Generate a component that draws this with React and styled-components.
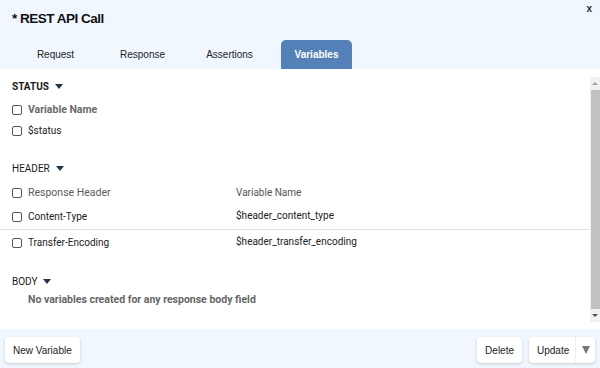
import React from "react";
import styled, { createGlobalStyle } from "styled-components";

const Global = createGlobalStyle`
  html, body { margin: 0; padding: 0; background: #fff; }
  body { font-family: "Liberation Sans", Arial, sans-serif; }
  * { box-sizing: border-box; }
`;

const Dialog = styled.div`
  width: 600px;
  height: 368px;
  display: flex;
  flex-direction: column;
  background: #f1f7fe;
  overflow: hidden;
`;

const Header = styled.div`
  position: relative;
  height: 69px;
  display: flex;
  flex-direction: column;
`;

const Title = styled.div`
  height: 40px;
  padding: 11px 0 0 12px;
  font-size: 13.5px;
  font-weight: bold;
  color: #111;
  letter-spacing: -0.5px;
`;

const Close = styled.div`
  position: absolute;
  top: 3px;
  right: 8px;
  font-size: 10px;
  font-weight: bold;
  color: #1d2b4a;
`;

const Tabs = styled.div`
  display: flex;
  gap: 16px;
  padding-left: 20px;
  height: 29px;
`;

const Tab = styled.div`
  width: 71px;
  height: 29px;
  display: flex;
  align-items: center;
  justify-content: center;
  font-size: 10px;
  border-radius: 5px 5px 0 0;
  color: ${(p) => (p.$active ? "#fff" : "#222")};
  background: ${(p) => (p.$active ? "#5381b8" : "transparent")};
  font-weight: ${(p) => (p.$active ? "bold" : "normal")};
  padding-bottom: 1px;
`;

const Body = styled.div`
  height: 260px;
  background: #fff;
  display: flex;
`;

const Scroll = styled.div`
  flex: 1;
  display: flex;
  flex-direction: column;
  font-family: Roboto, "Liberation Sans", sans-serif;
  font-size: 10px;
  color: #222;
`;

const SectionHead = styled.div`
  height: 20px;
  margin-top: ${(p) => p.$mt}px;
  padding-left: 12px;
  display: flex;
  align-items: center;
  gap: 6px;
  font-size: 10px;
  font-weight: ${(p) => (p.$bold ? "bold" : "normal")};
  color: #1a1a1a;
`;

const Caret = styled.span`
  width: 0;
  height: 0;
  border-left: 4.5px solid transparent;
  border-right: 4.5px solid transparent;
  border-top: 5px solid #24344a;
`;

const Row = styled.div`
  height: ${(p) => p.$h}px;
  margin-top: ${(p) => p.$mt || 0}px;
  display: flex;
  align-items: center;
  padding-left: 12px;
  border-bottom: ${(p) => (p.$line ? "1px solid #e2e2e2" : "none")};
  color: ${(p) => (p.$strong ? "#6a6a6a" : p.$head ? "#5a5a5a" : "#222")};
  font-weight: ${(p) => (p.$strong ? "bold" : "normal")};
  font-size: ${(p) => (p.$head ? "10.5px" : "10px")};
`;

const Check = styled.span`
  width: 10px;
  height: 10px;
  border: 1px solid #555;
  border-radius: 2px;
  margin-right: 6px;
  flex-shrink: 0;
`;

const Cell = styled.span`
  width: 208px;
`;

const VarCell = styled.span`
  font-size: 10px;
  color: ${(p) => (p.$head ? "#555" : "#222")};
  margin-top: ${(p) => p.$mt || 0}px;
`;

const Empty = styled.div`
  height: 16px;
  padding-left: 28px;
  display: flex;
  align-items: center;
  font-size: 10.5px;
  font-weight: bold;
  color: #666;
`;

const ScrollBar = styled.div`
  width: 10px;
  margin: 8px 0 7px;
  background: #f1f1f1;
  display: flex;
  flex-direction: column;
  align-items: center;
`;

const Arrow = styled.div`
  height: 13px;
  display: flex;
  align-items: center;
  justify-content: center;
  &::after {
    content: "";
    border-left: 3px solid transparent;
    border-right: 3px solid transparent;
    ${(p) => (p.$up ? "border-bottom: 3px solid #a3a3a3;" : "border-top: 3px solid #505050;")}
  }
`;

const Thumb = styled.div`
  flex: 1;
  width: 9px;
  background: #c1c1c1;
`;

const Footer = styled.div`
  flex: 1;
  display: flex;
  align-items: flex-start;
  padding: 8px 5px 0;
  gap: 7px;
`;

const Button = styled.div`
  height: 26px;
  padding: 0 8px;
  display: flex;
  align-items: center;
  background: #fff;
  border-radius: 4px;
  box-shadow: 0 1px 3px rgba(0, 0, 0, 0.18);
  font-size: 10px;
  color: #222;
  margin-left: ${(p) => (p.$push ? "auto" : "0")};
`;

const SplitButton = styled(Button)`
  padding: 0;
  width: 66px;
`;

const SplitLabel = styled.span`
  flex: 1;
  padding-left: 8px;
  height: 100%;
  display: flex;
  align-items: center;
  border-right: 1px solid #eee;
`;

const SplitArrow = styled.span`
  width: 19px;
  display: flex;
  justify-content: center;
  &::after {
    content: "";
    border-left: 4px solid transparent;
    border-right: 4px solid transparent;
    border-top: 8px solid #777;
  }
`;

export default function App() {
  return (
    <>
      <Global />
      <Dialog>
        <Header>
          <Title>* REST API Call</Title>
          <Close>x</Close>
          <Tabs>
            <Tab>Request</Tab>
            <Tab>Response</Tab>
            <Tab>Assertions</Tab>
            <Tab $active>Variables</Tab>
          </Tabs>
        </Header>
        <Body>
          <Scroll>
            <SectionHead $mt={7} $bold>
              STATUS <Caret />
            </SectionHead>
            <Row $h={21} $mt={3} $head $strong>
              <Check />
              Variable Name
            </Row>
            <Row $h={21}>
              <Check />
              $status
            </Row>
            <SectionHead $mt={17}>
              HEADER <Caret />
            </SectionHead>
            <Row $h={23} $mt={3} $head>
              <Check />
              <Cell>Response Header</Cell>
              <VarCell $head>Variable Name</VarCell>
            </Row>
            <Row $h={26} $line>
              <Check />
              <Cell>Content-Type</Cell>
              <VarCell $mt={-3}>$header_content_type</VarCell>
            </Row>
            <Row $h={25}>
              <Check />
              <Cell>Transfer-Encoding</Cell>
              <VarCell $mt={-2}>$header_transfer_encoding</VarCell>
            </Row>
            <SectionHead $mt={16}>
              BODY <Caret />
            </SectionHead>
            <Empty>No variables created for any response body field</Empty>
          </Scroll>
          <ScrollBar>
            <Arrow $up />
            <Thumb />
            <Arrow />
          </ScrollBar>
        </Body>
        <Footer>
          <Button>New Variable</Button>
          <Button $push>Delete</Button>
          <SplitButton>
            <SplitLabel>Update</SplitLabel>
            <SplitArrow />
          </SplitButton>
        </Footer>
      </Dialog>
    </>
  );
}
